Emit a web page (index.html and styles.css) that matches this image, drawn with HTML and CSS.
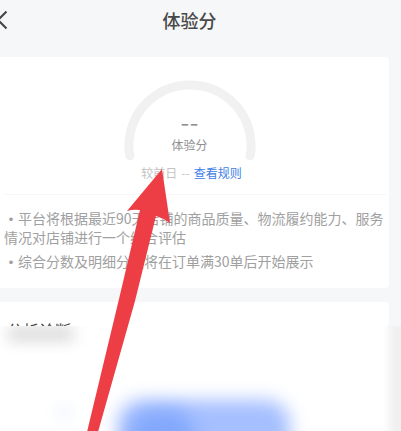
FILE: index.html
```html
<!DOCTYPE html>
<html lang="zh-CN">
<head>
<meta charset="utf-8">
<meta name="viewport" content="width=device-width, initial-scale=1">
<title>体验分</title>
<link rel="stylesheet" href="styles.css">
</head>
<body>
<div class="page">
  <header class="topbar">
    <button class="back" type="button" aria-label="返回">
      <svg width="8" height="20" viewBox="0 0 8 20" fill="none" stroke="#444" stroke-width="2"><path d="M6.500 1.500L-2 10l8.500 8.500"/></svg>
    </button>
    <h1 class="title">体验分</h1>
  </header>
  <main class="content">
    <section class="card score">
      <div class="gauge">
        <svg class="arc" width="132" height="82" viewBox="0 0 132 82" fill="none" stroke="#f1f1f1" stroke-width="9" stroke-linecap="round"><path d="M6 76C4 68 5 62 5.500 58C9 29 34 5 66 5s57 24 60.500 53C127 62 128 68 126 76"/></svg>
        <div class="reading">
          <div class="value">--</div>
          <div class="label">体验分</div>
        </div>
      </div>
      <p class="compare"><span>较前日</span><span>--</span><a href="#rules">查看规则</a></p>
      <ul class="notes">
        <li>平台将根据最近90天店铺的商品质量、物流履约能力、服务情况对店铺进行一个综合评估</li>
        <li>综合分数及明细分数将在订单满30单后开始展示</li>
      </ul>
    </section>
    <section class="card diagnosis">
      <h2 class="heading">分析诊断</h2>
    </section>
  </main>
  <div class="haze">
    <div class="haze-card"></div>
    <div class="haze-text"></div>
    <div class="haze-spot"></div>
    <div class="haze-button"></div>
    <div class="haze-core"></div>
  </div>
  <svg class="pointer" width="90" height="264" viewBox="0 0 90 264" aria-hidden="true"><path fill="#ee3e45" d="M81 1L46 43Q52 41 59 42L38 131L6 264H17L54 133L75 48Q82 50 89 55Z"/></svg>
</div>
</body>
</html>
```
FILE: styles.css
```css
* {
  box-sizing: border-box;
}

body {
  margin: 0;
  background: #f6f7f9;
  color: #a0a0a0;
  font-family: "Noto Sans CJK SC", sans-serif;
}

.page {
  position: relative;
  display: flex;
  flex-direction: column;
  min-height: 100vh;
  overflow: hidden;
}

.topbar {
  display: grid;
  grid-template-columns: 24px 1fr 24px;
  align-items: center;
  height: 40px;
  margin-bottom: 17px;
}

.back {
  display: flex;
  padding: 0;
  border: 0;
  background: none;
}

.title {
  margin: 0;
  padding-right: 22px;
  color: #484848;
  font-size: 18px;
  font-weight: 500;
  line-height: 38px;
  text-align: center;
}

.content {
  display: flex;
  flex-direction: column;
  gap: 14px;
  padding-right: 12px;
}

.card {
  background: #fff;
  border-radius: 0 4px 4px 0;
}

.score {
  padding: 23px 2px 16px 4px;
}

.gauge {
  display: grid;
  justify-items: center;
  height: 84px;
  padding-right: 12px;
}

.arc,
.reading {
  grid-area: 1 / 1;
}

.reading {
  padding-top: 32px;
  color: #909090;
  text-align: center;
}

.value {
  font-family: Inter, sans-serif;
  font-size: 20px;
  line-height: 24px;
}

.label {
  font-size: 12px;
  line-height: 18px;
}

.compare {
  display: flex;
  justify-content: center;
  gap: 4px;
  margin: 0;
  padding: 0 8px 12px 0;
  border-bottom: 1px solid #f7f7f7;
  color: #c4c4c4;
  font-size: 12px;
  line-height: 18px;
}

.compare a {
  color: #4080e6;
  text-decoration: none;
}

.notes {
  display: grid;
  gap: 5px;
  margin: 0;
  padding: 14px 0 1px;
  list-style: none;
  font-size: 14px;
  line-height: 19px;
}

.notes li::before {
  content: "·";
  display: inline-flex;
  justify-content: center;
  width: 14px;
  font-weight: 700;
}

.diagnosis {
  height: 24px;
  padding: 16px 7px 0;
  overflow: hidden;
}

.heading {
  margin: 0;
  color: #444;
  font-size: 16px;
  font-weight: 400;
  line-height: 24px;
}

.haze {
  position: relative;
  flex: 1;
  min-height: 105px;
  overflow: hidden;
  background: #f0f0f1;
}

.haze div {
  position: absolute;
}

.haze-card {
  inset: -20px 12px -20px -20px;
  background: #fff;
  filter: blur(4px);
}

.haze-text {
  top: 0;
  left: 8px;
  width: 66px;
  height: 16px;
  background: #dedede;
  filter: blur(7px);
}

.haze-spot {
  top: 78px;
  left: 54px;
  width: 20px;
  height: 16px;
  background: #f6f9ff;
  filter: blur(6px);
}

.haze-button {
  top: 74px;
  left: 118px;
  width: 172px;
  height: 80px;
  border-radius: 24px;
  background: #a5bfff;
  filter: blur(9px);
}

.haze-core {
  top: 84px;
  left: 130px;
  width: 64px;
  height: 60px;
  border-radius: 24px;
  background: #83a8fc;
  filter: blur(9px);
}

.pointer {
  position: absolute;
  top: 168px;
  left: 81px;
}
```
